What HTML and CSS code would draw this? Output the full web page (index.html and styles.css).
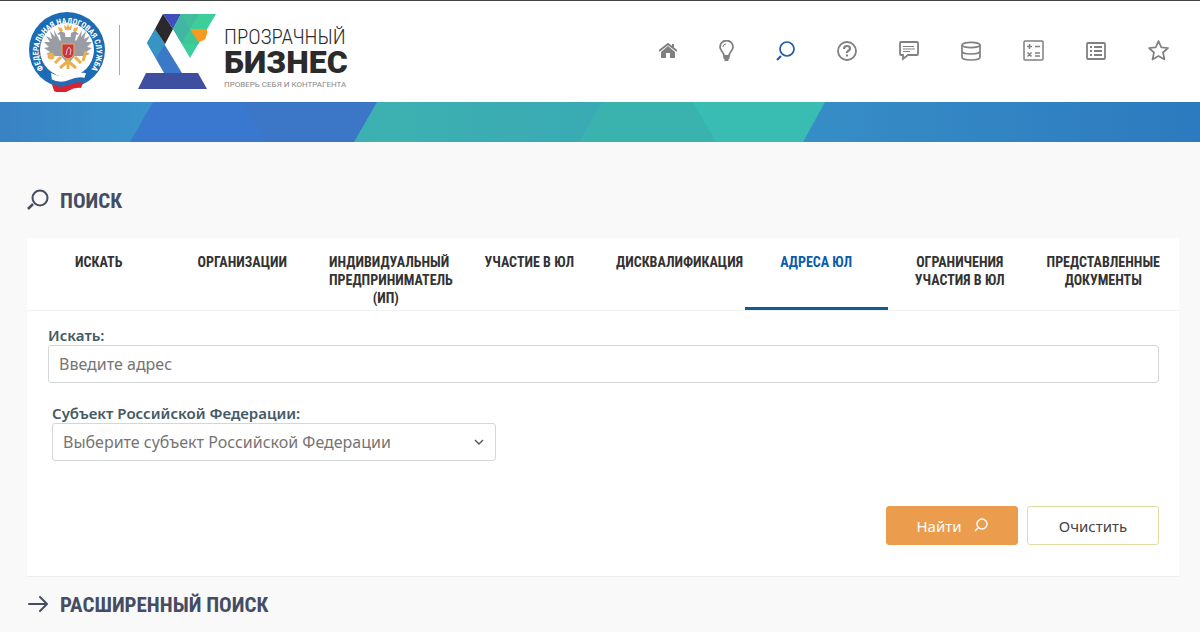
FILE: index.html
```
<!DOCTYPE html>
<html lang="ru">

<head>
    <meta charset="UTF-8">
    <meta name="viewport" content="width=device-width, initial-scale=1.0">
    <title>Прозрачный бизнес</title>
    <link rel="stylesheet" href="styles.css">
</head>

<body>

    <header class="header">
        <a href="#" class="emblem" aria-label="ФНС России">
            <svg width="78" height="80" viewBox="0 0 78 80">
                <defs>
                    <path id="ring" d="M17 60 A29 29 0 1 1 60 60" />
                </defs>
                <circle cx="38" cy="38" r="38" fill="#1c6cb5" />
                <circle cx="38" cy="38" r="27" fill="#fff" />
                <text class="ring-text"><textPath href="#ring" startOffset="50%" text-anchor="middle">ФЕДЕРАЛЬНАЯ НАЛОГОВАЯ СЛУЖБА</textPath></text>
                <!-- eagle -->
                <g fill="#9a9ca3">
                    <path d="M35 25 L31 29 L25 18 L26 25 L21 19 L23 27 L17 24 L21 30 L15 30 L20 35 L15 36 L21 40 L17 42 L24 44 L32 44 L39 52 L46 44 L54 44 L61 42 L57 40 L63 36 L58 35 L63 30 L57 30 L61 24 L55 27 L57 19 L52 25 L53 18 L47 29 L43 25 Z" />
                    <path d="M37 32 L32 29 L31 23 L28 22 L32 19 L36 21 Z M41 32 L46 29 L47 23 L50 22 L46 19 L42 21 Z" />
                </g>
                <g fill="#e9b04c">
                    <path d="M36 18 L35 13 L38 15 L39 11 L40 15 L43 13 L42 18 Z" />
                    <path d="M30 19 L29 15 L33 16 L34 19 Z M44 19 L45 16 L49 15 L48 19 Z" />
                </g>
                <g fill="none" stroke="#e9b04c" stroke-width="3">
                    <path d="M32 45 L26 51 M46 45 L52 51 M39 47 V57 M31 56 L39 49 L47 56" />
                    <circle cx="22" cy="44" r="2" />
                    <path d="M57 39 L54 49" />
                </g>
                <path d="M33 32 H45 V42 Q44 46 39 47 Q34 46 33 42 Z" fill="#c93645" stroke="#e9b04c" />
                <path d="M37 43 L38 38 L40 35 L42 38 L41 43" fill="none" stroke="#e8c5c8" />
                <!-- flag -->
                <path d="M22 61 Q31 66 40 63 T57 61 L53 74 Q46 72 39 76 T24 77 Z" fill="#fff" />
                <path d="M22 67 Q31 72 40 68 T56 66 L54 72 Q46 70 39 74 T24 75 Z" fill="#2869b5" />
                <path d="M23 72 Q31 77 40 73 T54 71 L52 76 Q46 75 39 79 T25 79 Z" fill="#d9232e" />
            </svg>
        </a>
        <a href="#" class="brand">
            <svg width="78" height="75" viewBox="0 0 78 75">
                <polygon points="8,59 60,59 69,75 0,75" fill="#3f4f9f" />
                <polygon points="9,29 17,15 44,59 26,59" fill="#3b78c9" />
                <polygon points="9,29 17,15 27,30 18,44" fill="#3795c5" />
                <polygon points="25,0 35,15 27,30 17,15" fill="#2b292b" />
                <polygon points="25,0 43,0 35,15" fill="#3f4dbd" />
                <polygon points="43,0 78,0 52,44 35,15" fill="#3ccf9a" />
                <polygon points="43,0 52,15 44,30 35,15" fill="#42b6a5" />
                <polygon points="43,0 61,0 52,15" fill="#43be9d" />
                <polygon points="52,15 61,30 44,30" fill="#3fc694" />
                <path d="M52 15 H69 Q70 22 66 26 L61 28 L59 26 Z" fill="#f79a22" />
            </svg>
            <span class="brand-text">
                <span class="brand-top">ПРОЗРАЧНЫЙ</span>
                <strong class="brand-main">БИЗНЕС</strong>
                <small class="brand-note">ПРОВЕРЬ СЕБЯ И КОНТРАГЕНТА</small>
            </span>
        </a>

        <nav class="menu">
            <a href="#" aria-label="Главная">
                <svg width="18" height="20" viewBox="0 0 18 20">
                    <path d="M9 5 L16 11 V17 H11 V12 H7 V17 H2 V11 Z" fill="currentColor" />
                    <path d="M0 10 L9 3 L18 10 M14 3 V7" fill="none" stroke="currentColor" stroke-width="2" />
                </svg>
            </a>
            <a href="#" aria-label="Подсказки">
                <svg width="15" height="22" viewBox="0 0 15 22" fill="none" stroke="currentColor" stroke-width="1.8">
                    <path d="M5 16 C5 12 1 11 1 7 A6.500 6.500 0 0 1 14 7 C14 11 10 12 10 16 Z" />
                    <path d="M4 7 Q4 4 7 4" stroke-width="1" />
                    <path d="M4.500 18 H10.500 M5.500 20 H9.500" stroke-width="2" />
                </svg>
            </a>
            <a href="#" class="current" aria-label="Поиск">
                <svg width="19" height="20" viewBox="0 0 19 20" fill="none" stroke="currentColor">
                    <circle cx="11" cy="8" r="7" stroke-width="1.700" />
                    <path d="M1 19 L5 15" stroke-width="2.200" />
                </svg>
            </a>
            <a href="#" aria-label="Помощь">
                <svg width="20" height="20" viewBox="0 0 20 20" fill="none" stroke="currentColor">
                    <circle cx="10" cy="10" r="9" stroke-width="1.800" />
                    <path d="M7 8 Q7 5 10 5 Q13 5 13 7.500 Q13 9 11 10 Q10 10.500 10 12" stroke-width="2.200" />
                    <path d="M10 13.500 V15.500" stroke-width="2.200" />
                </svg>
            </a>
            <a href="#" aria-label="Сообщения">
                <svg width="20" height="20" viewBox="0 0 20 20" fill="none" stroke="currentColor" stroke-width="1.800">
                    <path d="M2 1 H18 Q19 1 19 2 V13 Q19 14 18 14 H9 L4 18 V14 H2 Q1 14 1 13 V2 Q1 1 2 1 Z" />
                    <path d="M4 5.500 H15 M4 8 H16 M4 10.500 H11" stroke-width="1.200" />
                </svg>
            </a>
            <a href="#" aria-label="Данные">
                <svg width="20" height="20" viewBox="0 0 20 20" fill="none" stroke="currentColor" stroke-width="1.700">
                    <ellipse cx="10" cy="4" rx="9" ry="2.700" />
                    <path d="M1 4 V16 C1 20 19 20 19 16 V4 M1 10 C1 14 19 14 19 10" />
                </svg>
            </a>
            <a href="#" aria-label="Калькулятор">
                <svg width="21" height="21" viewBox="0 0 21 21" fill="none" stroke="currentColor" stroke-width="1.500">
                    <rect x="1" y="1" width="19" height="19" rx="1" />
                    <path d="M4 6.500 H9 M6.500 4 V9 M12 6.500 H17 M4.500 12.500 L8.500 16.500 M8.500 12.500 L4.500 16.500 M12 13 H17 M12 16 H17" />
                </svg>
            </a>
            <a href="#" aria-label="Список">
                <svg width="20" height="18" viewBox="0 0 20 18" fill="none" stroke="currentColor" stroke-width="1.800">
                    <rect x="1" y="1" width="18" height="16" rx="1" />
                    <path d="M4 5 H6 M4 9 H6 M4 13 H6 M8 5 H16 M8 9 H16 M8 13 H16" />
                </svg>
            </a>
            <a href="#" aria-label="Избранное">
                <svg width="21" height="21" viewBox="0 0 21 21" fill="none" stroke="currentColor" stroke-width="1.700" stroke-linejoin="round">
                    <path d="M10.500 1 L13.300 7.300 L20 8 L15 12.500 L16.500 19.500 L10.500 16 L4.500 19.500 L6 12.500 L1 8 L7.700 7.300 Z" />
                </svg>
            </a>
        </nav>
    </header>

    <svg class="band" viewBox="0 0 1200 40" preserveAspectRatio="none" aria-hidden="true">
        <defs>
            <linearGradient id="g1"><stop offset="0" stop-color="#3982c4" /><stop offset="1" stop-color="#3a94cb" /></linearGradient>
            <linearGradient id="g3"><stop offset="0" stop-color="#3db1b1" /><stop offset="1" stop-color="#39aab3" /></linearGradient>
            <linearGradient id="g4"><stop offset="0" stop-color="#378ec6" /><stop offset="1" stop-color="#2c7abf" /></linearGradient>
        </defs>
        <!-- every next piece lies over the previous one, so no seams -->
        <path d="M0 0 H1200 V40 H0 Z" fill="#39bdb3" />
        <path d="M377 0 H693 L716 40 H354 Z" fill="#3ab3af" />
        <path d="M350 0 H602 L579 40 H350 Z" fill="url(#g3)" />
        <path d="M0 0 H377 L354 40 H0 Z" fill="#3c76c6" />
        <path d="M0 0 H243 L266 40 H0 Z" fill="#3a77ce" />
        <path d="M0 0 H153 L130 40 H0 Z" fill="url(#g1)" />
        <path d="M825 0 H1200 V40 H803 Z" fill="url(#g4)" />
    </svg>

    <main class="container">
        <h1 class="title">
            <svg width="22" height="22" viewBox="0 0 22 22" fill="none" stroke="currentColor">
                <circle cx="13" cy="9" r="7.500" stroke-width="2" />
                <path d="M1 20 L6 15" stroke-width="2.500" />
            </svg>
            ПОИСК
        </h1>

        <section class="panel">
            <nav class="tabs">
                <a href="#">Искать</a>
                <a href="#">Организации</a>
                <a href="#">Индивидуальный предприниматель (ИП)</a>
                <a href="#">Участие в ЮЛ</a>
                <a href="#">Дисквалификация</a>
                <a href="#" class="active">Адреса ЮЛ</a>
                <a href="#">Ограничения участия в ЮЛ</a>
                <a href="#">Представленные документы</a>
            </nav>

            <form class="form">
                <label for="address">Искать:</label>
                <input type="text" id="address" class="field" placeholder="Введите адрес" autocomplete="off">

                <div class="region">
                    <label for="region">Субъект Российской Федерации:</label>
                    <div class="select-box">
                        <select id="region" class="field">
                            <option>Выберите субъект Российской Федерации</option>
                        </select>
                        <svg class="arrow" width="10" height="6" viewBox="0 0 10 6" fill="none" stroke="#555" stroke-width="1.400">
                            <path d="M1 1 L5 5 L9 1" />
                        </svg>
                    </div>
                </div>

                <div class="buttons">
                    <button type="submit" class="btn btn-find">
                        Найти
                        <svg width="14" height="15" viewBox="0 0 14 15" fill="none" stroke="currentColor" stroke-width="1.500">
                            <circle cx="8" cy="6" r="5" />
                            <path d="M1 13 L4 10" />
                        </svg>
                    </button>
                    <button type="reset" class="btn btn-clear">Очистить</button>
                </div>
            </form>
        </section>

        <h2 class="title title-more">
            <svg width="22" height="18" viewBox="0 0 22 18" fill="none" stroke="currentColor" stroke-width="2" stroke-linecap="round" stroke-linejoin="round">
                <path d="M2 9 H20 M13 2 L20 9 L13 16" />
            </svg>
            РАСШИРЕННЫЙ ПОИСК
        </h2>
    </main>

</body>

</html>
```

FILE: styles.css
```
* {
    margin: 0;
    padding: 0;
    box-sizing: border-box;
}

body {
    background-color: #f9f9f9;
    color: #333;
    font-family: "Noto Sans", "Open Sans", sans-serif;
    font-size: 16px;
}

a {
    color: inherit;
    text-decoration: none;
}

svg {
    display: block;
    flex-shrink: 0;
}

.header {
    display: flex;
    align-items: center;
    height: 102px;
    padding: 0 31px 0 29px;
    background-color: #fff;
    border-top: 1px solid #444;
}

.emblem {
    padding-right: 12px;
}

.ring-text {
    fill: #fff;
    font: bold 8px "Roboto Condensed", "Roboto", sans-serif;
}

.brand {
    display: flex;
    align-items: center;
    gap: 8px;
    padding-left: 19px;
    position: relative;
}

.brand::before {
    content: "";
    position: absolute;
    left: 0;
    top: 15px;
    width: 1px;
    height: 50px;
    background-color: #aaa;
}

.brand-text {
    display: flex;
    flex-direction: column;
    padding-top: 16px;
    font-family: "Roboto", sans-serif;
    color: #2b2b2b;
}

.brand-top {
    font-family: "Roboto Condensed", "Roboto", sans-serif;
    font-size: 21px;
    font-weight: 300;
    line-height: 22px;
}

.brand-main {
    font-size: 32px;
    font-weight: 900;
    line-height: 28px;
}

.brand-note {
    font-size: 8px;
    line-height: 18px;
    color: #888;
}

.menu {
    display: flex;
    align-items: center;
    gap: 42px;
    margin-left: auto;
    padding-bottom: 2px;
    color: #808080;
}

.menu .current {
    color: #1c5ca8;
}

.band {
    width: 100%;
    height: 40px;
}

.container {
    padding: 41px 21px 10px 27px;
}

.title {
    display: flex;
    align-items: center;
    gap: 11px;
    font-family: "Roboto Condensed", "Liberation Sans Narrow", sans-serif;
    font-size: 21px;
    line-height: 36px;
    color: #454d63;
}

.title svg {
    margin-bottom: 2px;
}

.panel {
    margin-top: 19px;
    background-color: #fff;
    border-bottom: 1px solid #eee;
}

.tabs {
    display: grid;
    grid-template-columns: repeat(8, minmax(0, 1fr));
    padding-right: 4px;
    border-bottom: 1px solid #f3f3f3;
    font-family: "Roboto Condensed", "Liberation Sans Narrow", sans-serif;
    font-size: 14px;
    font-weight: bold;
    line-height: 18px;
    text-align: center;
    text-transform: uppercase;
}

.tabs a {
    padding: 15px 15px 0;
    border-bottom: 3px solid transparent;
}

.tabs .active {
    color: #0a5cad;
    border-color: #135c94;
}

.form {
    padding: 15px 20px 31px 21px;
}

.form label {
    display: block;
    font-size: 15px;
    font-weight: 600;
    line-height: 19px;
    color: #455a64;
}

.field {
    display: block;
    width: 100%;
    height: 38px;
    padding: 0 10px;
    border: 1px solid #d3d7d9;
    border-radius: 3px;
    background-color: #fff;
    color: #757575;
    font-family: inherit;
    font-size: 16px;
}

.field::placeholder {
    color: #757575;
}

.region {
    width: 40%;
    min-width: 300px;
    margin: 21px 0 45px 4px;
}

.select-box {
    position: relative;
}

select.field {
    appearance: none;
}

.arrow {
    position: absolute;
    right: 12px;
    top: 16px;
    pointer-events: none;
}

.buttons {
    display: flex;
    justify-content: flex-end;
    gap: 9px;
}

.btn {
    display: flex;
    align-items: center;
    justify-content: center;
    gap: 12px;
    width: 132px;
    height: 39px;
    border: 1px solid #eb9c4d;
    border-radius: 3px;
    font-family: inherit;
    font-size: 15px;
}

.btn-find {
    background-color: #eb9c4d;
    color: #fff;
}

.btn-clear {
    background-color: #fff;
    border-color: #dfdca6;
    color: #444;
}

.title-more {
    margin-top: 10px;
}
```
